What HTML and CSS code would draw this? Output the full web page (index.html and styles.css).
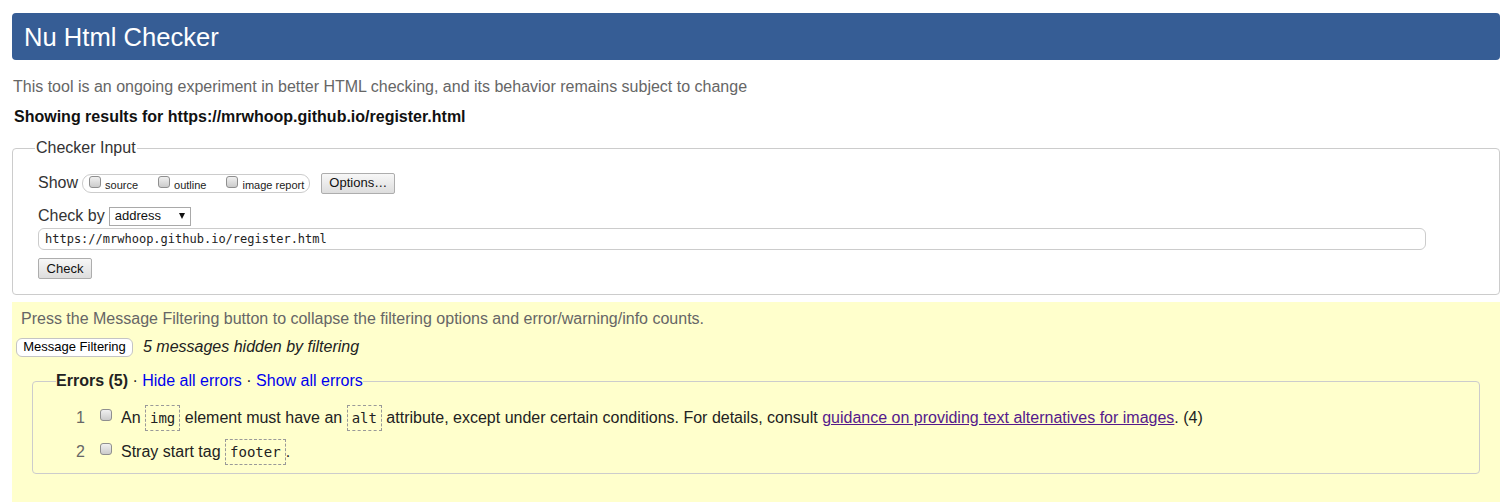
FILE: index.html
```html
<!DOCTYPE html>
<html lang="en">
<head>
<meta charset="utf-8">
<title>Nu Html Checker</title>
<link rel="stylesheet" href="styles.css">
</head>
<body>
<div class="page">
  <header class="banner"><h1>Nu Html Checker</h1></header>
  <p class="intro">This tool is an ongoing experiment in better HTML checking, and its behavior remains subject to change</p>
  <p class="showing">Showing results for https://mrwhoop.github.io/register.html</p>

  <fieldset class="input-box">
    <legend>Checker Input</legend>
    <div class="row show-row">
      <span class="lbl">Show</span>
      <span class="pill">
        <label class="opt"><input type="checkbox" class="cb"><span>source</span></label>
        <label class="opt"><input type="checkbox" class="cb"><span>outline</span></label>
        <label class="opt last"><input type="checkbox" class="cb"><span>image report</span></label>
      </span>
      <span class="btn options">Options…</span>
    </div>
    <div class="row by-row">
      <span class="lbl">Check by</span>
      <span class="select"><span>address</span><span class="arrow"></span></span>
    </div>
    <div class="url">https://mrwhoop.github.io/register.html</div>
    <div class="row check-row"><span class="btn check">Check</span></div>
  </fieldset>

  <section class="results">
    <p class="hint">Press the Message Filtering button to collapse the filtering options and error/warning/info counts.</p>
    <div class="filter-row">
      <span class="filter-btn">Message Filtering</span>
      <em class="hidden-note">5 messages hidden by filtering</em>
    </div>
    <fieldset class="errors">
      <legend><strong>Errors (5)</strong> · <a href="#" class="blue">Hide all errors</a> · <a href="#" class="blue">Show all errors</a></legend>
      <ol class="msgs">
        <li><span class="num">1</span><input type="checkbox" class="cb"><span class="msg">An <code>img</code> element must have an <code>alt</code> attribute, except under certain conditions. For details, consult <a href="#" class="visited">guidance on providing text alternatives for images</a>. (4)</span></li>
        <li><span class="num">2</span><input type="checkbox" class="cb"><span class="msg">Stray start tag <code>footer</code>.</span></li>
      </ol>
    </fieldset>
  </section>
</div>
</body>
</html>
```

FILE: styles.css
```css
* { box-sizing: border-box; }
html, body { margin: 0; padding: 0; background: #fff; }
body {
  font-family: "Liberation Sans", Arial, sans-serif;
  font-size: 16px;
  line-height: 20px;
  color: #222;
}
.page { margin: 0 2px 0 12px; padding-top: 13px; }

.banner {
  height: 47px;
  background: #365d95;
  border-radius: 4px;
  display: flex;
  align-items: center;
  padding-left: 12px;
}
.banner h1 {
  margin: 0;
  font-weight: normal;
  font-size: 25.6px;
  line-height: 30px;
  color: #fff;
}

.intro { margin: 17px 0 0 1px; color: #666; }
.showing { margin: 10px 0 0 2px; font-weight: bold; color: #111; }

.input-box {
  margin: 11px 0 0 0;
  border: 1px solid #ccc;
  border-radius: 4px;
  padding: 0 12px 15px 25px;
  min-width: 0;
}
.input-box legend {
  padding: 0 1px;
  margin-left: -3px;
  color: #333;
  font-size: 16px;
  line-height: 20px;
}
.row { display: flex; align-items: center; }
.lbl { color: #333; }
.show-row { height: 22px; margin-top: 14px; }
.pill {
  display: inline-flex;
  align-items: center;
  height: 19px;
  margin-left: 4px;
  padding: 0 5px 0 6px;
  border: 1px solid #ccc;
  border-radius: 9px;
  font-size: 11px;
  color: #222;
}
.opt { display: inline-flex; align-items: center; margin-right: 20px; }
.opt.last { margin-right: 0; }
.opt span { margin-left: 4px; padding-top: 3px; }

.cb {
  -webkit-appearance: none;
  appearance: none;
  width: 12px;
  height: 12px;
  margin: 0;
  border: 1px solid #8f8f8f;
  border-radius: 3px;
  background: linear-gradient(#f0f0f0, #cbcbcb);
  flex: none;
}
.pill .cb { margin-top: -3px; }

.btn {
  display: inline-flex;
  align-items: center;
  justify-content: center;
  height: 21px;
  font-size: 13px;
  color: #111;
  border: 1px solid #adadad;
  border-radius: 2px;
  background: linear-gradient(#f7f7f7, #dddddd);
}
.options { margin-left: 11px; width: 74px; }
.check { width: 54px; }

.by-row { height: 22px; margin-top: 11px; }
.select {
  display: inline-flex;
  align-items: center;
  width: 82px;
  height: 19px;
  margin-left: 4px;
  padding-left: 5px;
  border: 1px solid #a9a9a9;
  font-size: 13px;
  color: #111;
  background: #fff;
}
.arrow {
  margin-left: auto;
  margin-right: 5px;
  width: 0;
  height: 0;
  border-left: 3.5px solid transparent;
  border-right: 3.5px solid transparent;
  border-top: 6px solid #111;
}

.url {
  margin-top: 1px;
  width: 1388px;
  height: 22px;
  border: 1px solid #ccc;
  border-radius: 6px;
  padding-left: 6px;
  font-family: "DejaVu Sans Mono", monospace;
  font-size: 12px;
  line-height: 20px;
  color: #222;
}
.check-row { margin-top: 8px; }

.results {
  margin-top: 7px;
  background: #ffc;
  padding: 7px 4px 30px;
}
.hint { margin: 0 0 0 5px; color: #666; }
.filter-row { display: flex; align-items: center; height: 20px; margin-top: 8px; }
.filter-btn {
  display: inline-flex;
  align-items: center;
  justify-content: center;
  width: 117px;
  height: 19px;
  border: 1px solid #c4c4c4;
  border-radius: 6px;
  background: #fff;
  font-size: 13px;
  color: #000;
}
.hidden-note { margin-left: 10px; color: #222; }

.errors {
  margin: 14px 16px 0;
  border: 1px solid #ccc;
  border-radius: 4px;
  padding: 0 0 8px 23px;
  min-width: 0;
}
.errors legend { padding: 0; margin: 0; color: #222; }
.errors legend strong { color: #222; }
.blue { color: #00e; text-decoration: none; }

.msgs { list-style: none; margin: 14px 0 0; padding: 0; }
.msgs li { display: flex; align-items: flex-start; line-height: 26px; min-height: 26px; }
.msgs li + li { margin-top: 8px; }
.num { width: 29px; text-align: right; color: #666; flex: none; }
.msgs .cb { margin-left: 15px; margin-top: 4px; }
.msg { margin-left: 9px; color: #222; }
code {
  display: inline-block;
  vertical-align: top;
  height: 26px;
  padding: 0 4px;
  border: 1px dashed #999;
  font-family: "DejaVu Sans Mono", monospace;
  font-size: 14px;
  line-height: 24px;
  color: #222;
}
.visited { color: #551a8b; text-decoration: underline; }
```
